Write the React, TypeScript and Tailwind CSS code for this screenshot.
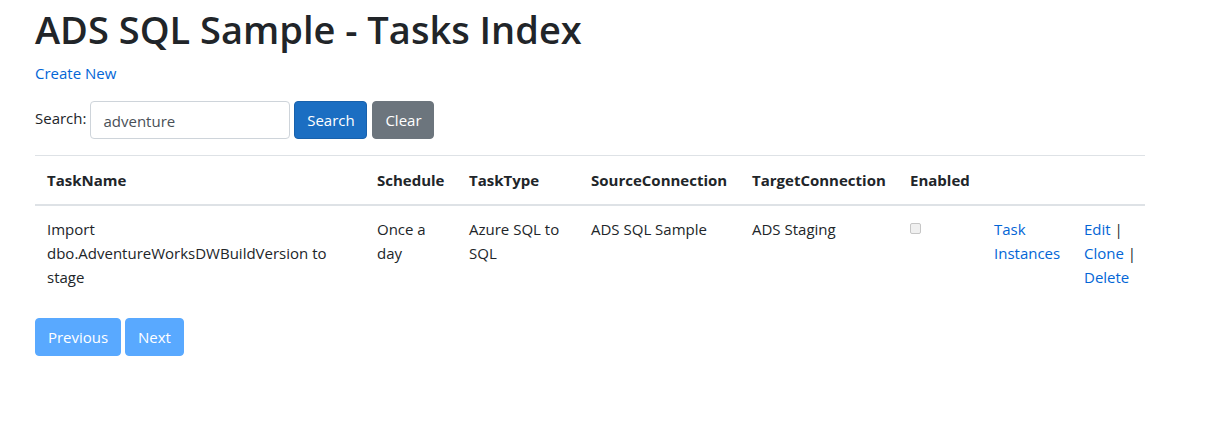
import React from "react";

function Link({ children }: { children: React.ReactNode }) {
  return (
    <a className="text-[#0366d6] no-underline" href="#">
      {children}
    </a>
  );
}

export default function App() {
  return (
    <div className="min-h-[444px] bg-white text-[#212529] text-[15px] leading-[24px] font-['Open_Sans',sans-serif]">
      <div className="ml-[35px] w-[1110px] pt-[5px]">
        <h1 className="text-[38px] leading-[48px] font-semibold mb-[8px]">ADS SQL Sample - Tasks Index</h1>
        <p className="mb-[16px]">
          <Link>Create New</Link>
        </p>
        <form className="flex items-center mb-[16px]" onSubmit={(e) => e.preventDefault()}>
          <span className="mr-[4px] -mt-[4px]">Search:</span>
          <input
            className="w-[200px] h-[38px] border border-[#ced4da] rounded-[4px] px-[12px] pt-[2px] text-[#495057] outline-none"
            defaultValue="adventure"
          />
          <button type="button" className="ml-[4px] w-[73px] h-[38px] rounded-[4px] bg-[#1b6ec2] border border-[#1861ac] text-white">
            Search
          </button>
          <button type="button" className="ml-[5px] w-[62px] h-[38px] rounded-[4px] bg-[#6c757d] border border-[#6c757d] text-white">
            Clear
          </button>
        </form>
        <table className="w-[1110px] table-fixed border-collapse mb-[17px]">
          <colgroup>
            <col className="w-[330px]" />
            <col className="w-[92px]" />
            <col className="w-[122px]" />
            <col className="w-[161px]" />
            <col className="w-[158px]" />
            <col className="w-[84px]" />
            <col className="w-[90px]" />
            <col className="w-[73px]" />
          </colgroup>
          <thead>
            <tr>
              {["TaskName", "Schedule", "TaskType", "SourceConnection", "TargetConnection", "Enabled", "", ""].map((h, i) => (
                <th key={i} className="text-left font-bold align-bottom p-[12px] border-t border-t-[#dee2e6] border-b-2 border-b-[#dee2e6] whitespace-nowrap">
                  {h}
                </th>
              ))}
            </tr>
          </thead>
          <tbody>
            <tr className="align-top">
              <td className="p-[12px] pt-[11px]">Import dbo.AdventureWorksDWBuildVersion to stage</td>
              <td className="p-[12px] pt-[11px]">Once a day</td>
              <td className="p-[12px] pt-[11px]">Azure SQL to SQL</td>
              <td className="p-[12px] pt-[11px]">ADS SQL Sample</td>
              <td className="p-[12px] pt-[11px]">ADS Staging</td>
              <td className="p-[12px] pt-[11px]">
                <span className="mt-[6px] block w-[11px] h-[11px] rounded-[2px] border border-[#c6c6c6] bg-[#f0f0f0]" />
              </td>
              <td className="p-[12px] pt-[11px]">
                <Link>Task Instances</Link>
              </td>
              <td className="p-[12px] pt-[11px] pr-0">
                <span className="whitespace-nowrap">
                  <Link>Edit</Link> |
                </span>{" "}
                <span className="whitespace-nowrap">
                  <Link>Clone</Link> |
                </span>{" "}
                <Link>Delete</Link>
              </td>
            </tr>
          </tbody>
        </table>
        <div className="flex gap-[4px]">
          <button type="button" className="w-[86px] h-[38px] rounded-[4px] bg-[#59a9ff] border border-[#59a9ff] text-white">
            Previous
          </button>
          <button type="button" className="w-[59px] h-[38px] rounded-[4px] bg-[#59a9ff] border border-[#59a9ff] text-white">
            Next
          </button>
        </div>
      </div>
    </div>
  );
}
